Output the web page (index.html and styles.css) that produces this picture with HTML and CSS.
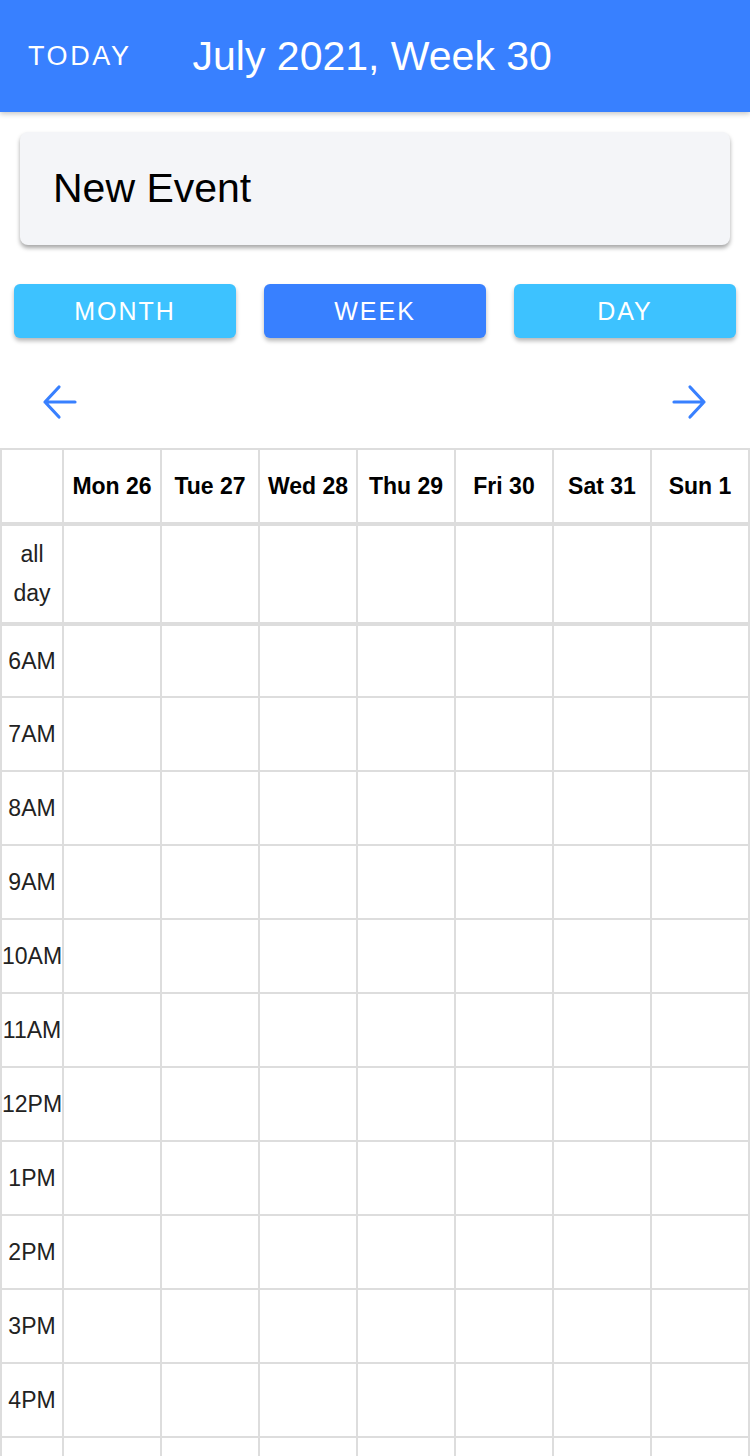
FILE: index.html
```html
<!DOCTYPE html>
<html>
<head>
<meta charset="utf-8">
<link rel="stylesheet" href="styles.css">
</head>
<body>
<header class="toolbar">
  <span class="today">TODAY</span>
  <h1 class="title">July 2021, Week 30</h1>
</header>
<main class="content">
  <div class="event-card">New Event</div>
  <div class="modes">
    <button class="mode">MONTH</button>
    <button class="mode active">WEEK</button>
    <button class="mode">DAY</button>
  </div>
  <div class="nav">
    <svg class="arrow" width="36" height="36" viewBox="0 0 36 36"><path d="M33 18H3M17 3L3 18L17 33" fill="none" stroke="#3880ff" stroke-width="3.2" stroke-linecap="round" stroke-linejoin="round"/></svg>
    <svg class="arrow" width="36" height="36" viewBox="0 0 36 36"><path d="M3 18H33M19 3L33 18L19 33" fill="none" stroke="#3880ff" stroke-width="3.2" stroke-linecap="round" stroke-linejoin="round"/></svg>
  </div>
  <div class="cal">
    <div class="grid head">
      <div class="cell"></div>
      <div class="cell day">Mon 26</div>
      <div class="cell day">Tue 27</div>
      <div class="cell day">Wed 28</div>
      <div class="cell day">Thu 29</div>
      <div class="cell day">Fri 30</div>
      <div class="cell day">Sat 31</div>
      <div class="cell day">Sun 1</div>
    </div>
    <div class="grid allday">
      <div class="cell label allday-label">all<br>day</div>
      <div class="cell"></div><div class="cell"></div><div class="cell"></div><div class="cell"></div><div class="cell"></div><div class="cell"></div><div class="cell"></div>
    </div>
    <div class="grid body">
      <div class="cell label">6AM</div><div class="cell"></div><div class="cell"></div><div class="cell"></div><div class="cell"></div><div class="cell"></div><div class="cell"></div><div class="cell"></div>
      <div class="cell label">7AM</div><div class="cell"></div><div class="cell"></div><div class="cell"></div><div class="cell"></div><div class="cell"></div><div class="cell"></div><div class="cell"></div>
      <div class="cell label">8AM</div><div class="cell"></div><div class="cell"></div><div class="cell"></div><div class="cell"></div><div class="cell"></div><div class="cell"></div><div class="cell"></div>
      <div class="cell label">9AM</div><div class="cell"></div><div class="cell"></div><div class="cell"></div><div class="cell"></div><div class="cell"></div><div class="cell"></div><div class="cell"></div>
      <div class="cell label">10AM</div><div class="cell"></div><div class="cell"></div><div class="cell"></div><div class="cell"></div><div class="cell"></div><div class="cell"></div><div class="cell"></div>
      <div class="cell label">11AM</div><div class="cell"></div><div class="cell"></div><div class="cell"></div><div class="cell"></div><div class="cell"></div><div class="cell"></div><div class="cell"></div>
      <div class="cell label">12PM</div><div class="cell"></div><div class="cell"></div><div class="cell"></div><div class="cell"></div><div class="cell"></div><div class="cell"></div><div class="cell"></div>
      <div class="cell label">1PM</div><div class="cell"></div><div class="cell"></div><div class="cell"></div><div class="cell"></div><div class="cell"></div><div class="cell"></div><div class="cell"></div>
      <div class="cell label">2PM</div><div class="cell"></div><div class="cell"></div><div class="cell"></div><div class="cell"></div><div class="cell"></div><div class="cell"></div><div class="cell"></div>
      <div class="cell label">3PM</div><div class="cell"></div><div class="cell"></div><div class="cell"></div><div class="cell"></div><div class="cell"></div><div class="cell"></div><div class="cell"></div>
      <div class="cell label">4PM</div><div class="cell"></div><div class="cell"></div><div class="cell"></div><div class="cell"></div><div class="cell"></div><div class="cell"></div><div class="cell"></div>
      <div class="cell label"></div><div class="cell"></div><div class="cell"></div><div class="cell"></div><div class="cell"></div><div class="cell"></div><div class="cell"></div><div class="cell"></div>
    </div>
  </div>
</main>
</body>
</html>
```
FILE: styles.css
```css
* { box-sizing: border-box; }
html, body { margin: 0; padding: 0; }
body {
  width: 750px;
  height: 1456px;
  overflow: hidden;
  background: #fff;
  font-family: "Liberation Sans", Arial, sans-serif;
  color: #000;
}
.toolbar {
  height: 112px;
  background: #3880ff;
  display: flex;
  align-items: center;
  color: #fff;
  box-shadow: 0 2px 5px rgba(0,0,0,0.22);
  position: relative;
  z-index: 2;
}
.today {
  margin-left: 28px;
  font-size: 27px;
  letter-spacing: 2.6px;
}
.title {
  margin: 0 0 0 61px;
  font-size: 41px;
  font-weight: normal;
}
.content {
  display: flex;
  flex-direction: column;
}
.event-card {
  margin: 20px 20px 0;
  height: 113px;
  background: #f4f5f8;
  border-radius: 8px;
  box-shadow: 0 3px 4px rgba(0,0,0,0.35);
  display: flex;
  align-items: center;
  padding-left: 33px;
  font-size: 41px;
  color: #000;
}
.modes {
  display: flex;
  gap: 28px;
  margin: 39px 14px 0;
}
.mode {
  flex: 1;
  height: 54px;
  border: none;
  border-radius: 6px;
  background: #3dc2ff;
  color: #fff;
  font-family: "Liberation Sans", Arial, sans-serif;
  font-size: 25px;
  letter-spacing: 2px;
  padding: 0;
  box-shadow: 0 3px 4px rgba(0,0,0,0.28);
}
.mode.active { background: #3880ff; }
.nav {
  display: flex;
  justify-content: space-between;
  padding: 0 43px 0 42px;
  margin-top: 46px;
  height: 36px;
  margin-bottom: 28px;
}
.cal {
  background: #dddddd;
  padding: 2px;
  display: flex;
  flex-direction: column;
  gap: 4px;
}
.grid {
  display: grid;
  grid-template-columns: 60px repeat(7, 96px);
  gap: 2px;
}
.head { grid-template-rows: 72px; }
.allday { grid-template-rows: 96px; }
.body { grid-template-rows: 70px repeat(11, 72px); }
.cell { background: #fff; }
.day {
  display: flex;
  align-items: center;
  justify-content: center;
  font-weight: bold;
  font-size: 23px;
  white-space: nowrap;
}
.label {
  display: flex;
  align-items: center;
  justify-content: center;
  font-size: 23px;
  color: #222;
  white-space: nowrap;
  text-align: center;
}
.allday-label { line-height: 39px; }
```
